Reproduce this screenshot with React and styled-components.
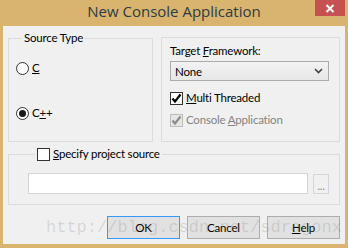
import React from 'react';
import styled, {createGlobalStyle} from 'styled-components';

const GlobalStyle = createGlobalStyle`
    body {
        margin: 0;
        font-family: Lato, "Liberation Sans", sans-serif;
        font-size: 11.5px;
        letter-spacing: -0.2px;
    }
`;

const App = () => {
    return <Window>
        <GlobalStyle/>
        <TitleBar>
            <span/>
            <Title>New Console Application</Title>
            <CloseButton>
                <svg width="10" height="9" viewBox="0 0 10 9">
                    <path d="M1.5 1 L8.5 8 M8.5 1 L1.5 8" stroke="#fff" strokeWidth="2"/>
                </svg>
            </CloseButton>
        </TitleBar>
        <Client>
            <TopRow>
                <Group>
                    <Legend>Source Type</Legend>
                    <RadioList>
                        <OptionRow><Radio/><span><u>C</u></span></OptionRow>
                        <OptionRow><Radio $checked/><span>C<u>+</u>+</span></OptionRow>
                    </RadioList>
                </Group>
                <Group $top="6px" $pad="6px 10px 0 8px">
                    <Caption>Target <u>F</u>ramework:</Caption>
                    <Select>
                        <span>None</span>
                        <svg width="9" height="6" viewBox="0 0 9 6">
                            <path d="M1 1 L4.5 4.5 L8 1" stroke="#444" strokeWidth="1.6" fill="none"/>
                        </svg>
                    </Select>
                    <Checks>
                        <OptionRow><Check $checked/><span><u>M</u>ulti Threaded</span></OptionRow>
                        <OptionRow $disabled><Check $checked $disabled/><span>Console <u>A</u>pplication</span></OptionRow>
                    </Checks>
                </Group>
            </TopRow>
            <Group $pad="0 10px 10px 19px">
                <Legend $check>
                    <OptionRow><Check/><span><u>S</u>pecify project source</span></OptionRow>
                </Legend>
                <PathRow>
                    <TextBox/>
                    <BrowseButton>...</BrowseButton>
                </PathRow>
            </Group>
            <ButtonRow>
                <Button $default>OK</Button>
                <Button>Cancel</Button>
                <Button><u>H</u>elp</Button>
            </ButtonRow>
            <Watermark>http://blog.csdn.net/sdragonx</Watermark>
        </Client>
    </Window>
}

const Radio = ({$checked}) => <RadioCircle>{$checked && <RadioDot/>}</RadioCircle>;

const Check = ({$checked, $disabled}) => <CheckBox $disabled={$disabled}>
    {$checked && <svg width="11" height="11" viewBox="0 0 11 11">
        <path d="M1.5 5.5 L4 8.5 L9.5 1.5" stroke={$disabled ? '#8c8c8c' : '#000'} strokeWidth="2.2" fill="none"/>
    </svg>}
</CheckBox>;

const Window = styled.div`
    width: 348px;
    height: 248px;
    background: #d8b46f;
    display: flex;
    flex-direction: column;
    box-sizing: border-box;
    padding: 0 3px 4px 3px;
`;

const TitleBar = styled.div`
    height: 26px;
    display: grid;
    grid-template-columns: 1fr auto 1fr;
    align-items: start;
`;

const Title = styled.div`
    font-family: "Open Sans", sans-serif;
    font-size: 15px;
    letter-spacing: 0;
    color: #2d3b44;
    line-height: 20px;
    padding-top: 1px;
`;

const CloseButton = styled.div`
    justify-self: end;
    width: 30px;
    height: 16px;
    background: #c75050;
    display: flex;
    align-items: center;
    justify-content: center;
`;

const Client = styled.div`
    flex: 1;
    position: relative;
    background: #f0f0f0;
    padding: 5px 5px 0 5px;
    display: flex;
    flex-direction: column;
`;

const TopRow = styled.div`
    display: grid;
    grid-template-columns: 145px 179px;
    gap: 8px;
    height: 111px;
    margin-bottom: 5px;
`;

const Group = styled.fieldset`
    margin: ${p => p.$top || '0'} 0 0 0;
    border: 1px solid #dcdcdc;
    padding: ${p => p.$pad || '0 7px'};
    min-width: 0;
    display: flex;
    flex-direction: column;
`;

const Legend = styled.legend`
    margin-left: ${p => p.$check ? '7px' : '6px'};
    padding: 0 2px;
    line-height: 14px;
    color: #000;
`;

const RadioList = styled.div`
    display: flex;
    flex-direction: column;
    gap: 31px;
    margin-top: 16px;
`;

const OptionRow = styled.label`
    display: flex;
    align-items: center;
    gap: 3px;
    line-height: 14px;
    height: 14px;
    color: ${p => p.$disabled ? '#838383' : '#000'};
`;

const RadioCircle = styled.span`
    width: 11px;
    height: 11px;
    border: 1px solid #333;
    border-radius: 50%;
    background: #fff;
    display: flex;
    align-items: center;
    justify-content: center;
`;

const RadioDot = styled.span`
    width: 7px;
    height: 7px;
    border-radius: 50%;
    background: #1a1a1a;
`;

const CheckBox = styled.span`
    width: 11px;
    height: 11px;
    border: 1px solid ${p => p.$disabled ? '#bcbcbc' : '#333'};
    background: ${p => p.$disabled ? '#e6e6e6' : '#fff'};
    display: flex;
    align-items: center;
    justify-content: center;
`;

const Caption = styled.div`
    line-height: 14px;
`;

const Select = styled.div`
    margin-top: 3px;
    height: 18px;
    border: 1px solid #acacac;
    background: linear-gradient(#f2f2f2, #e8e8e8);
    display: flex;
    align-items: center;
    justify-content: space-between;
    padding: 0 5px 0 4px;
`;

const Checks = styled.div`
    display: flex;
    flex-direction: column;
    gap: 8px;
    margin-top: 10px;
`;

const PathRow = styled.div`
    display: flex;
    gap: 5px;
    margin-top: 12px;
    align-items: flex-start;
`;

const TextBox = styled.div`
    width: 279px;
    height: 19px;
    border: 1px solid #d5d5d5;
    background: #fff;
`;

const BrowseButton = styled.div`
    width: 14px;
    height: 18px;
    margin-top: 1px;
    border: 1px solid #d5d5d5;
    background: #f0f0f0;
    color: #8c8c8c;
    display: flex;
    align-items: flex-end;
    justify-content: center;
    line-height: 14px;
    font-size: 11px;
`;

const ButtonRow = styled.div`
    display: flex;
    justify-content: flex-end;
    gap: 7px;
    margin-top: 11px;
`;

const Button = styled.div`
    width: 71px;
    height: 21px;
    border: 1px solid ${p => p.$default ? '#3399ff' : '#adadad'};
    background: #e1e1e1;
    display: flex;
    align-items: center;
    justify-content: center;
    color: #000;
`;

const Watermark = styled.div`
    position: absolute;
    left: 43px;
    top: 193px;
    font-family: "Liberation Mono", monospace;
    font-size: 17px;
    line-height: 17px;
    letter-spacing: 0;
    color: rgba(120, 120, 110, 0.22);
    pointer-events: none;
    white-space: nowrap;
`;

export default App;
